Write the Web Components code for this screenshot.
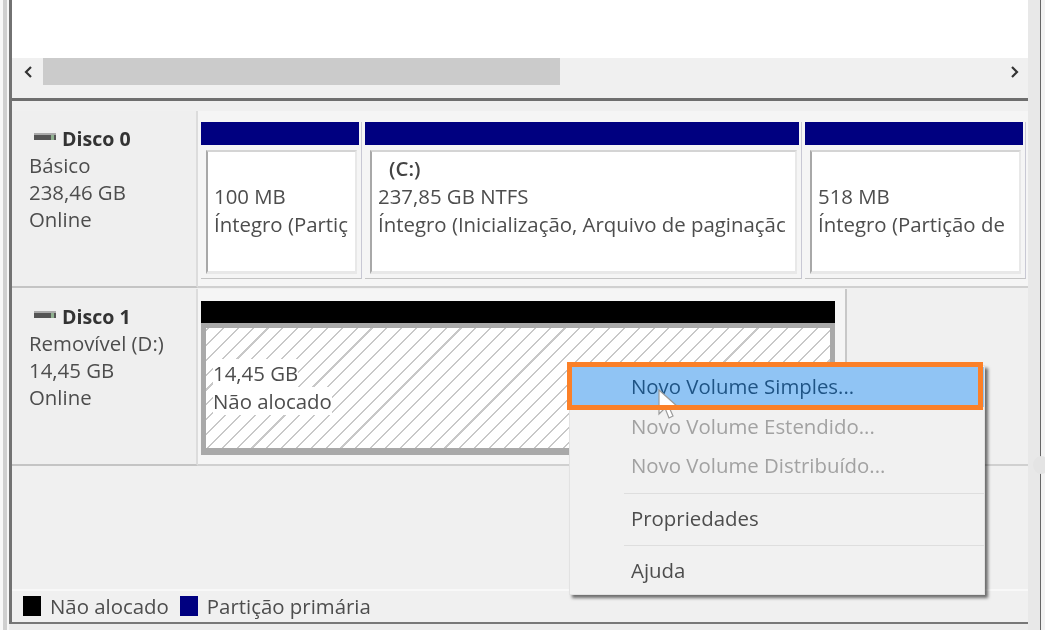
<!DOCTYPE html>
<html lang="pt">
<head>
<meta charset="utf-8">
<title>Gerenciamento de disco</title>
<style>
    html, body { margin: 0; height: 100%; overflow: hidden; background: #f0f0f0; }
    body { font-family: "Open Sans", "Noto Sans", sans-serif; }
</style>
</head>
<body>
<disk-manager>
    <disk-row name="Disco 0" kind="Básico" size="238,46 GB" state="Online">
        <disk-volume width="158" size="100 MB" status="Íntegro (Partiç"></disk-volume>
        <disk-volume width="434" label="(C:)" size="237,85 GB NTFS" status="Íntegro (Inicialização, Arquivo de paginaçãc"></disk-volume>
        <disk-volume width="218" size="518 MB" status="Íntegro (Partição de"></disk-volume>
    </disk-row>
    <disk-row name="Disco 1" kind="Removível (D:)" size="14,45 GB" state="Online">
        <disk-volume width="634" unallocated size="14,45 GB" status="Não alocado"></disk-volume>
        <disk-free></disk-free>
    </disk-row>
</disk-manager>
<context-menu>
    <menu-entry selected>Novo Volume Simples...</menu-entry>
    <menu-entry disabled>Novo Volume Estendido...</menu-entry>
    <menu-entry disabled>Novo Volume Distribuído...</menu-entry>
    <menu-rule></menu-rule>
    <menu-entry>Propriedades</menu-entry>
    <menu-rule></menu-rule>
    <menu-entry>Ajuda</menu-entry>
</context-menu>
<script>
const components = [
    {
        name: 'disk-manager',
        class: class DiskManager extends HTMLElement {
            constructor() {
                super();
                this.attachShadow({ mode: 'open' });
            }
            connectedCallback() {
                this.shadowRoot.innerHTML = `
                    <style>
                        :host {
                            display: flex;
                            width: 1045px;
                            height: 630px;
                            background: #ececec;
                            overflow: hidden;
                        }
                        .edge-left {
                            flex: 0 0 9px;
                            background: linear-gradient(90deg, #f8f8f8 0 3px, #cfcfcf 3px 7px, #f6f6f6 7px);
                        }
                        .pane {
                            flex: 0 0 1019px;
                            min-width: 0;
                            box-sizing: border-box;
                            height: 624px;
                            display: flex;
                            flex-direction: column;
                            background: #f0f0f0;
                            border-left: 3px solid #727272;
                            border-bottom: 2px solid #777;
                        }
                        .list {
                            flex: 0 0 58px;
                            background: #fff;
                        }
                        .hscroll {
                            flex: 0 0 43px;
                            box-sizing: border-box;
                            display: flex;
                            align-items: flex-start;
                            border-bottom: 3px solid #6e6e6e;
                            background: #f0f0f0;
                            color: #333;
                        }
                        .arrow {
                            flex: 0 0 31px;
                            height: 27px;
                            display: flex;
                            align-items: center;
                            justify-content: center;
                        }
                        .arrow.next { flex-basis: 26px; }
                        .track {
                            flex: 1;
                            height: 27px;
                        }
                        .thumb {
                            width: 517px;
                            height: 100%;
                            background: #cbcbcb;
                        }
                        .disks {
                            flex: 1;
                            min-height: 0;
                            padding-top: 10px;
                        }
                        disk-legend { margin-top: auto; }
                        .edge-right {
                            flex: 1;
                            position: relative;
                            background: linear-gradient(90deg, #e8e8e8 0 12px, #666 12px 13px, #f2f2f2 13px);
                        }
                        .grip {
                            position: absolute;
                            left: 5px;
                            top: 456px;
                            width: 16px;
                            height: 18px;
                            border-radius: 50%;
                            background: #e4e4e4;
                        }
                    </style>
                    <div class="edge-left"></div>
                    <div class="pane">
                        <div class="list"></div>
                        <div class="hscroll">
                            <div class="arrow"><svg width="12" height="14" viewBox="0 0 12 14"><path d="M9 2 4 7l5 5" fill="none" stroke="currentColor" stroke-width="2.2"/></svg></div>
                            <div class="track"><div class="thumb"></div></div>
                            <div class="arrow next"><svg width="12" height="14" viewBox="0 0 12 14"><path d="M3 2l5 5-5 5" fill="none" stroke="currentColor" stroke-width="2.2"/></svg></div>
                        </div>
                        <div class="disks"><slot></slot></div>
                        <disk-legend></disk-legend>
                    </div>
                    <div class="edge-right"><div class="grip"></div></div>
                `;
            }
        }
    },
    {
        name: 'disk-row',
        class: class DiskRow extends HTMLElement {
            constructor() {
                super();
                this.attachShadow({ mode: 'open' });
            }
            connectedCallback() {
                this.shadowRoot.innerHTML = `
                    <style>
                        :host {
                            display: grid;
                            grid-template-columns: 186px minmax(0, 1fr);
                            height: 178px;
                            font-size: 20.4px;
                            line-height: 27px;
                            color: #4d4d4d;
                        }
                        .info {
                            box-sizing: border-box;
                            height: 177px;
                            padding: 14px 0 0 17px;
                            background: #efefef;
                            border-right: 2px solid #dcdcdc;
                            border-bottom: 2px solid #c4c4c4;
                        }
                        .info div { filter: blur(.5px); }
                        .name {
                            display: flex;
                            align-items: center;
                            gap: 6px;
                            margin-left: 5px;
                            font-size: 19.6px;
                            font-weight: 700;
                            color: #333;
                        }
                        .disk-icon {
                            width: 22px;
                            height: 5px;
                            margin-top: -5px;
                            background: linear-gradient(90deg, #555 0 17px, #8fb08f 17px 20px, #555 20px);
                            border-top: 2px solid #aaa;
                        }
                        .volumes {
                            display: flex;
                            min-width: 0;
                            height: 177px;
                            box-sizing: border-box;
                            padding: 11px 0 0 3px;
                            border-bottom: 2px solid #d0d0d0;
                            background: #f5f5f5;
                        }
                    </style>
                    <div class="info">
                        <div class="name"><span class="disk-icon"></span>${this.getAttribute('name')}</div>
                        <div>${this.getAttribute('kind')}</div>
                        <div>${this.getAttribute('size')}</div>
                        <div>${this.getAttribute('state')}</div>
                    </div>
                    <div class="volumes"><slot></slot></div>
                `;
            }
        }
    },
    {
        name: 'disk-volume',
        class: class DiskVolume extends HTMLElement {
            constructor() {
                super();
                this.attachShadow({ mode: 'open' });
            }
            connectedCallback() {
                const label = this.getAttribute('label');
                this.shadowRoot.innerHTML = `
                    <style>
                        :host {
                            display: block;
                            flex: 0 0 ${this.getAttribute('width')}px;
                            min-width: 0;
                            height: 156px;
                            padding-right: 2px;
                            margin-right: 3px;
                            border-right: 1px solid #c8c8d4;
                            border-bottom: 1px solid #c4c4c4;
                            font-size: 20.4px;
                            line-height: 28px;
                            color: #4d4d4d;
                        }
                        .head {
                            height: 23px;
                            margin-bottom: 5px;
                            background: #000080;
                        }
                        .body {
                            box-sizing: border-box;
                            height: 124px;
                            margin: 0 2px 0 5px;
                            padding: 2px 4px 0 6px;
                            background: #fff;
                            border-top: 2px solid #d4d4d4;
                            border-left: 2px solid #a8a8a8;
                            border-right: 2px solid #e8e8e8;
                            border-bottom: 3px solid #e8e8e8;
                        }
                        .clip {
                            overflow: hidden;
                            white-space: nowrap;
                            filter: blur(.5px);
                        }
                        .label {
                            font-weight: 600;
                            color: #444;
                            padding-left: 11px;
                            min-height: 28px;
                        }
                        :host([unallocated]) {
                            height: auto;
                            padding-top: 1px;
                            margin-right: 0;
                            padding-right: 0;
                            border: 0;
                        }
                        :host([unallocated]) .head {
                            height: 22px;
                            margin: 0;
                            background: #000;
                        }
                        :host([unallocated]) .body {
                            height: 132px;
                            margin: 0;
                            padding: 31px 10px 0 7px;
                            border: 5px solid #a9a9a9;
                            border-bottom-width: 7px;
                            background: repeating-linear-gradient(-45deg, #fff 0 9px, #c8c8c8 9px 10.5px);
                        }
                        :host([unallocated]) .clip div {
                            width: fit-content;
                            background: #fff;
                        }
                    </style>
                    <div class="head"></div>
                    <div class="body">
                        <div class="clip">
                            ${this.hasAttribute('unallocated') ? '' : `<div class="label">${label || ''}</div>`}
                            <div>${this.getAttribute('size')}</div>
                            <div>${this.getAttribute('status')}</div>
                        </div>
                    </div>
                `;
            }
        }
    },
    {
        name: 'disk-free',
        class: class DiskFree extends HTMLElement {
            constructor() {
                super();
                this.attachShadow({ mode: 'open' });
            }
            connectedCallback() {
                this.shadowRoot.innerHTML = `
                    <style>
                        :host {
                            display: block;
                            flex: 1;
                            margin: -11px 0 0 10px;
                            border-left: 2px solid #c8c8c8;
                            background: #f0f0f0;
                        }
                    </style>
                `;
            }
        }
    },
    {
        name: 'disk-legend',
        class: class DiskLegend extends HTMLElement {
            constructor() {
                super();
                this.attachShadow({ mode: 'open' });
            }
            connectedCallback() {
                this.shadowRoot.innerHTML = `
                    <style>
                        :host {
                            display: flex;
                            align-items: center;
                            height: 33px;
                            box-sizing: border-box;
                            padding: 0 0 1px 11px;
                            border-top: 2px solid #f8f8f8;
                            font-size: 20.4px;
                            color: #4d4d4d;
                        }
                        i {
                            width: 18px;
                            height: 20px;
                            margin-right: 9px;
                        }
                        span {
                            margin-right: 11px;
                            filter: blur(.5px);
                        }
                    </style>
                    <i style="background:#000"></i><span>Não alocado</span>
                    <i style="background:#000080"></i><span>Partição primária</span>
                `;
            }
        }
    },
    {
        name: 'context-menu',
        class: class ContextMenu extends HTMLElement {
            constructor() {
                super();
                this.attachShadow({ mode: 'open' });
            }
            connectedCallback() {
                this.shadowRoot.innerHTML = `
                    <style>
                        :host {
                            position: absolute;
                            left: 569px;
                            top: 365px;
                            width: 416px;
                            height: 230px;
                            display: block;
                            box-sizing: border-box;
                            padding: 1px 0;
                            background: #f1f1f1;
                            border: 1px solid #e2e2e2;
                            box-shadow: 3px 3px 3px rgba(0, 0, 0, .55);
                            font-size: 20.4px;
                        }
                    </style>
                    <slot></slot>
                `;
            }
        }
    },
    {
        name: 'menu-entry',
        class: class MenuEntry extends HTMLElement {
            constructor() {
                super();
                this.attachShadow({ mode: 'open' });
            }
            connectedCallback() {
                this.shadowRoot.innerHTML = `
                    <style>
                        :host {
                            display: block;
                            position: relative;
                            height: 39.5px;
                            line-height: 39px;
                            padding-left: 61px;
                            color: #4d4d4d;
                        }
                        :host([disabled]) { color: #a2a2a2; }
                        :host([selected]) {
                            background: #90c4f4;
                            color: #1f5485;
                        }
                        span {
                            position: relative;
                            display: inline-block;
                            filter: blur(.5px);
                        }
                        .pointer {
                            position: absolute;
                            left: 88px;
                            top: 22px;
                        }
                        .mark {
                            position: absolute;
                            left: -3px;
                            top: -5px;
                            width: 416px;
                            height: 48px;
                            box-sizing: border-box;
                            border: 5px solid #fb8028;
                        }
                    </style>
                    <span><slot></slot></span>
                    ${this.hasAttribute('selected') ? `
                        <svg class="pointer" width="24" height="32" viewBox="0 0 24 32">
                            <path d="M1 1v24l6-6 4 10 4-2-4-9h9z" fill="#fff" stroke="#9a9a9a" stroke-width="1.2"/>
                        </svg>
                        <div class="mark"></div>
                    ` : ''}
                `;
            }
        }
    },
    {
        name: 'menu-rule',
        class: class MenuRule extends HTMLElement {
            constructor() {
                super();
                this.attachShadow({ mode: 'open' });
            }
            connectedCallback() {
                this.shadowRoot.innerHTML = `
                    <style>
                        :host {
                            display: block;
                            height: 1px;
                            margin: 7px 0 5px 54px;
                            background: #dedede;
                        }
                    </style>
                `;
            }
        }
    }
];
components.forEach(component => {
    customElements.define(component.name, component.class);
});
</script>
</body>
</html>
